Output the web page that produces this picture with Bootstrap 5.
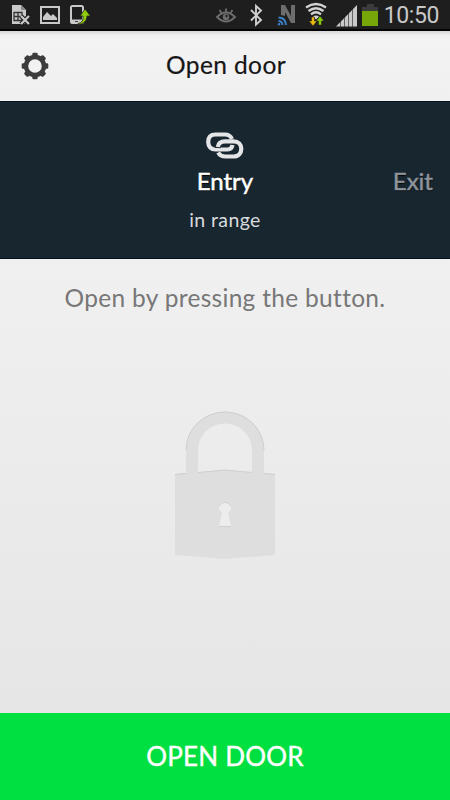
<!DOCTYPE html>
<html lang="en">
<head>
<meta charset="utf-8">
<meta name="viewport" content="width=device-width, initial-scale=1">
<title>Open door</title>
<link href="https://cdn.jsdelivr.net/npm/bootstrap@5.3.0/dist/css/bootstrap.min.css" rel="stylesheet">
<style>
body{height:800px;overflow:hidden;font-family:Lato,"Open Sans",sans-serif;background:linear-gradient(#f0f0f0 258px,#e6e6e6 712px)}
svg{display:block;flex:none}
.status{height:31px;background:#1e1e1e;border-bottom:2px solid #050505;padding:0 11px 0 10px}
.left-icons{gap:8px}
.clock{font:23px/30px Roboto,sans-serif;color:#c8c8c8;letter-spacing:-.4px;margin:1px 0 -1px 4px}
.topbar{height:70px;background:linear-gradient(#d8d6d7,#efeff0 4px,#f3f3f3 8px,#f0f0f0);padding-left:21px}
.topbar h1{font-size:24.500px;line-height:30px;color:#161616;-webkit-text-stroke:.2px #161616;letter-spacing:.4px;padding:0 0 2px 2px}
.side{width:28px;margin-right:21px}
.doors{height:158px;background:#182630;border-top:1px solid #06141f;border-bottom:1px solid #06101a;color:#fff}
.door-name{font-size:24px;line-height:30px;-webkit-text-stroke:.5px currentColor;text-shadow:0 1px 1px #000}
.door-state{font-size:19.500px;line-height:24px;color:#d9dbdd;letter-spacing:.4px;margin-top:12px}
.exit{color:#8e949c;padding:40px 17px 0 0}
.hint{font-size:24.500px;line-height:30px;color:#777;letter-spacing:.3px;padding-top:24px}
.lock{margin-top:97px}
.open-btn{height:87px;background:#00e040;font-size:26px;line-height:30px;-webkit-text-stroke:.4px #fff;letter-spacing:.2px;padding-bottom:7px}
.open-btn:hover{background:#00d63b}
</style>
<script src="https://cdn.jsdelivr.net/npm/bootstrap@5.3.0/dist/js/bootstrap.bundle.min.js"></script>
</head>
<body class="d-flex flex-column m-0">
<div class="status d-flex align-items-center justify-content-between flex-shrink-0">
  <div class="d-flex left-icons">
    <svg width="22" height="29" viewBox="0 0 22 29"><path d="M2 5h9l5 5v6l-1 8H2z" fill="#c9c9c9"/><path d="M11 5v5h5" fill="#888"/><path d="M4 12.500h8v8H4zM4 16.500h8M8 12.500v8" fill="none" stroke="#333" stroke-width="1.300"/><path d="M11 16l8 8M19 16l-8 8" stroke="#1e1e1e" stroke-width="4.500"/><path d="M11 16l8 8M19 16l-8 8" stroke="#c9c9c9" stroke-width="2.200"/></svg>
    <svg width="22" height="29" viewBox="0 0 22 29"><rect x="1" y="7" width="18" height="16" fill="none" stroke="#c9c9c9" stroke-width="2"/><path d="M3 20v-3l4-5 4 4 2-2 4 4v2z" fill="#c9c9c9"/></svg>
    <svg width="24" height="29" viewBox="0 0 24 29"><rect x="1" y="6" width="12" height="17" rx="1.500" fill="none" stroke="#c9c9c9" stroke-width="2"/><path d="M1 19.500h11v4H1z" fill="#c9c9c9"/><path d="M5 21.500h3" stroke="#444"/><path d="M8 23.500c4-1 5.500-3 5-7.500h-3l5-7 5.500 7h-3.500c0 5-3.500 8-9 8.500z" fill="#91c90c" stroke="#1e1e1e" stroke-width=".8"/></svg>
  </div>
  <div class="d-flex">
    <svg width="170" height="29" viewBox="210 0 170 29">
      <g fill="none" stroke="#6d6d6d" stroke-width="1.800"><path d="M217 17q9-9 18 0-9 9-18 0z"/><path d="M226 8.500v3.500M219.500 10l2 3M232.500 10l-2 3"/></g><circle cx="226" cy="17" r="3.200" fill="#6d6d6d"/><circle cx="226.500" cy="16" r="1.200" fill="#1e1e1e"/>
      <path d="M251 10l10 10-5 4.500V6l5 4.500-10 10" fill="none" stroke="#cfcfcf" stroke-width="1.900"/>
      <path d="M281 15V5h4l6 11V5h4v18h-4l-6-11v4z" fill="#6d6d6d"/>
      <g fill="none" stroke="#3b7fc4" stroke-width="2"><path d="M278.500 17.500q7 0 7.500 7.500M278.500 21q3.500 0 4 4"/></g><circle cx="279" cy="24.300" r="1.200" fill="#3b7fc4"/>
      <g fill="none" stroke="#d2d2d2" stroke-width="2.300"><path d="M306 7.500q10-7 20 0M308.500 11q7.500-5.500 15 0M311 14.300q5-4 10 0"/></g><path d="M313 16.500q3-2 6 0l-3 3z" fill="#d2d2d2"/>
      <path d="M311.500 17h3v4h2.500l-4 5-4-5h2.500z" fill="#eab813" stroke="#1e1e1e" stroke-width=".5"/><path d="M318.500 25v-4H316l4-5 4 5h-2.500v4z" fill="#86c90d" stroke="#1e1e1e" stroke-width=".5"/>
      <path d="M336 26.500L357 5v21.500z" fill="#c9c9c9"/><path d="M340.500 20v7M344.500 16v11M348.500 12v15M352.500 8v19" stroke="#1e1e1e" stroke-width=".6"/>
      <path d="M367 4h7v3h4v4h-16V7h5z" fill="#3c3c3c"/><path d="M362 11h16v15h-16z" fill="#76a60a"/>
    </svg>
    <div class="clock">10:50</div>
  </div>
</div>
<header class="topbar d-flex align-items-center flex-shrink-0">
  <svg width="28" height="28" viewBox="-14 -14 28 28" role="img" aria-label="Settings"><circle r="9" fill="none" stroke="#3c3c3c" stroke-width="4.400"/><g fill="#3c3c3c"><g id="teeth"><rect x="-2.700" y="-13.300" width="5.400" height="4" rx="1.300"/><rect x="-2.700" y="9.300" width="5.400" height="4" rx="1.300"/></g><use href="#teeth" transform="rotate(45)"/><use href="#teeth" transform="rotate(90)"/><use href="#teeth" transform="rotate(135)"/></g></svg>
  <h1 class="flex-fill text-center fw-normal mb-0">Open door</h1>
  <div class="side"></div>
</header>
<section class="doors row g-0 flex-shrink-0">
  <div class="col-4"></div>
  <div class="col-4 d-flex flex-column align-items-center">
    <svg class="mt-4" width="44" height="40" viewBox="203 125.500 44 40"><g fill="none" stroke="#e4e5e7" stroke-width="4.200"><path d="M232 138.500q-2-4.500-7-4.500h-9.500c-5 0-7.300 3-7.300 7.500s2.800 7.500 7.300 7.500h12c3 0 4.500-1.500 5-4.500"/></g><path d="M217.500 147.500c.5-4.500 3.500-6.700 7.500-6.700h8.500c5 0 7.800 3.200 7.800 7.500s-2.800 7.700-7.800 7.700h-8c-4 0-6-1.500-7-4.500" fill="none" stroke="#182630" stroke-width="6" stroke-dasharray="8 100"/><path d="M217.800 146.500c.5-4 3.500-5.700 7.200-5.700h8.500c5 0 7.800 3.200 7.800 7.500s-2.800 7.700-7.800 7.700h-8c-4 0-6-1.500-7.300-4" fill="none" stroke="#e4e5e7" stroke-width="4.200"/></svg>
    <div class="door-name">Entry</div>
    <div class="door-state">in range</div>
  </div>
  <div class="col-4 text-end mt-4"><div class="door-name exit">Exit</div></div>
</section>
<main class="flex-fill d-flex flex-column align-items-center">
  <p class="hint mb-0">Open by pressing the button.</p>
  <svg class="lock" width="104" height="152" viewBox="173 410 104 152">
    <path d="M175 474l11-1v-23a39 38.500 0 0 1 78 0v23l11 1v81l-50 4-50-4z M198 472.500l27-2.500 27 2.500V450a27 26.500 0 0 0-54 0z" fill="#dedede" fill-rule="evenodd"/>
    <path d="M186 450a39 38 0 0 1 78 0M175 474.500l11-1M198 472.500l27-2.500 27 2.500M264 473.500l11 1" fill="none" stroke="#cfcfcf"/>
    <path d="M222 513l-3 13h12l-3-13a6 6 0 1 0-6 0z" fill="#ededed"/><path d="M219 526.500h12M219.500 506a6 6 0 0 1 11 0" fill="none" stroke="#d0d0d0"/>
  </svg>
</main>
<button class="open-btn btn w-100 rounded-0 border-0 text-white flex-shrink-0">OPEN DOOR</button>
</body>
</html>
